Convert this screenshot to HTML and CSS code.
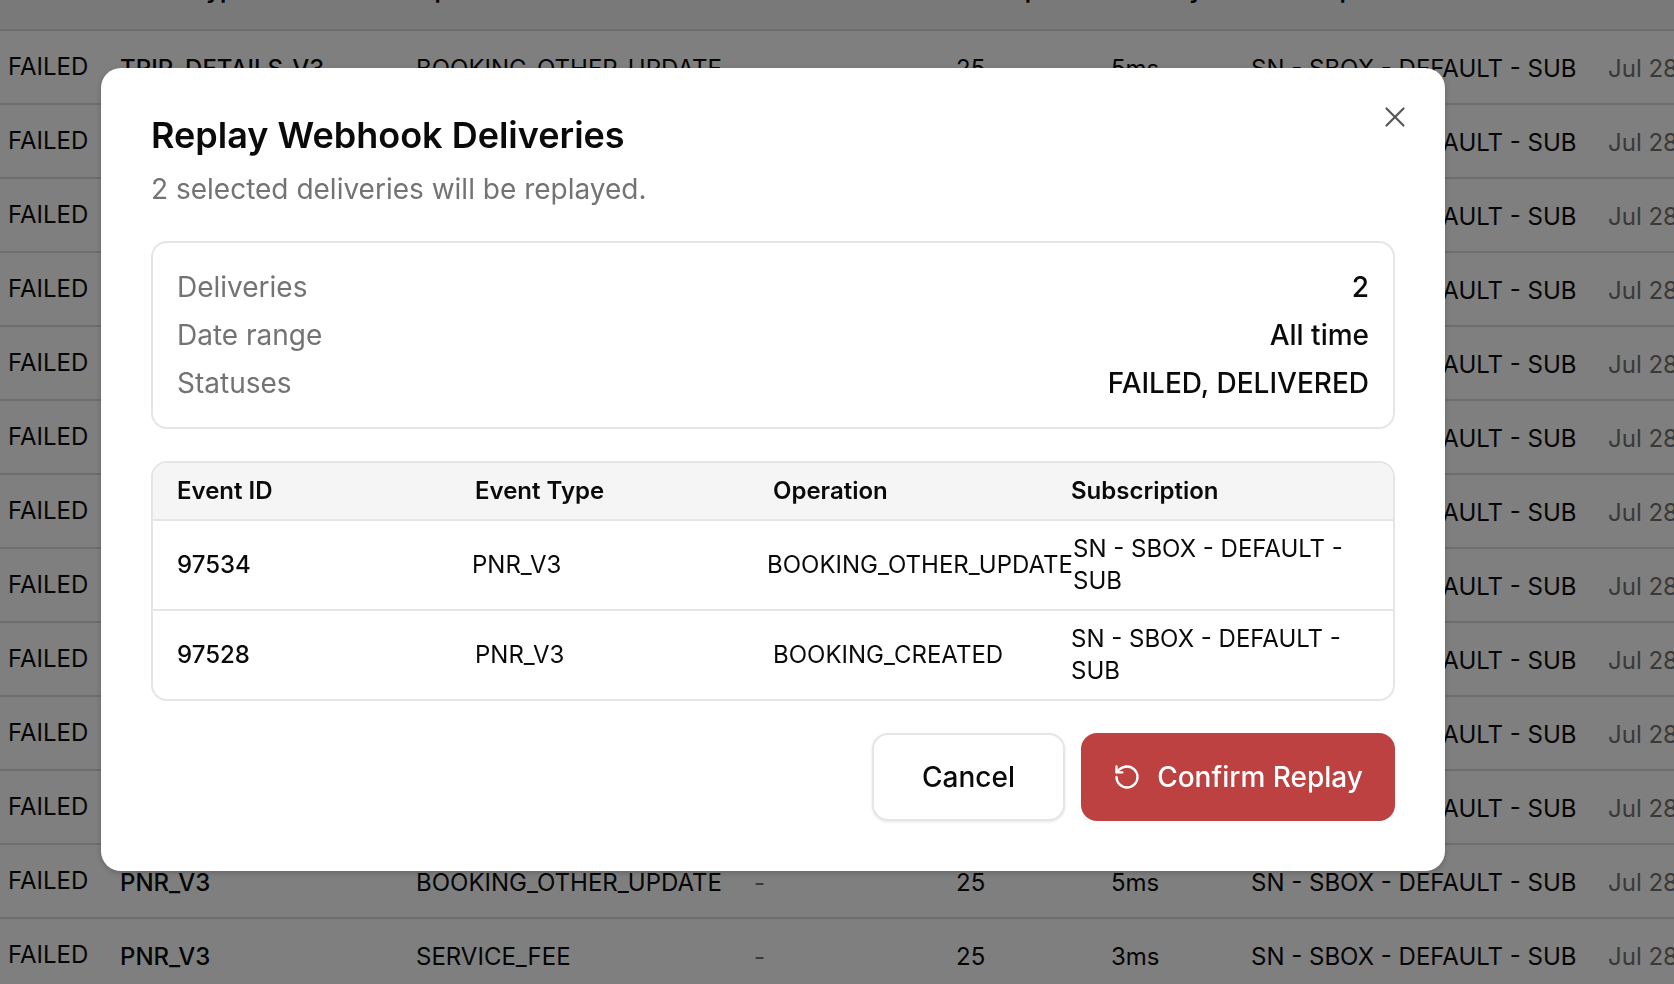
FILE: index.html
```html
<!DOCTYPE html>
<html lang="en">
<head>
    <meta charset="UTF-8">
    <title>Webhook Deliveries</title>
    <link rel="stylesheet" href="styles.css">
</head>
<body>
    <div class="page">
        <table class="log-table">
            <colgroup>
                <col class="col-status"><col class="col-type"><col class="col-op"><col class="col-dash">
                <col class="col-attempts"><col class="col-latency"><col class="col-sub"><col class="col-date">
            </colgroup>
            <thead>
                <tr><th>Status</th><th>Event Type</th><th>Operation</th><th>Error</th><th>Attempts</th><th>Latency</th><th>Subscription</th><th>Created</th></tr>
            </thead>
            <tbody>
                <tr><td class="status">FAILED</td><td class="type">TRIP_DETAILS_V3</td><td>BOOKING_OTHER_UPDATE</td><td class="dash">-</td><td>25</td><td>5ms</td><td>SN - SBOX - DEFAULT - SUB</td><td class="date">Jul 28</td></tr>
                <tr><td class="status">FAILED</td><td class="type">PNR_V3</td><td>BOOKING_OTHER_UPDATE</td><td class="dash">-</td><td>25</td><td>5ms</td><td>SN - SBOX - DEFAULT - SUB</td><td class="date">Jul 28</td></tr>
                <tr><td class="status">FAILED</td><td class="type">PNR_V3</td><td>BOOKING_CREATED</td><td class="dash">-</td><td>25</td><td>4ms</td><td>SN - SBOX - DEFAULT - SUB</td><td class="date">Jul 28</td></tr>
                <tr><td class="status">FAILED</td><td class="type">PNR_V3</td><td>SERVICE_FEE</td><td class="dash">-</td><td>25</td><td>3ms</td><td>SN - SBOX - DEFAULT - SUB</td><td class="date">Jul 28</td></tr>
                <tr><td class="status">FAILED</td><td class="type">PNR_V3</td><td>BOOKING_OTHER_UPDATE</td><td class="dash">-</td><td>25</td><td>5ms</td><td>SN - SBOX - DEFAULT - SUB</td><td class="date">Jul 28</td></tr>
                <tr><td class="status">FAILED</td><td class="type">PNR_V3</td><td>SERVICE_FEE</td><td class="dash">-</td><td>25</td><td>3ms</td><td>SN - SBOX - DEFAULT - SUB</td><td class="date">Jul 28</td></tr>
                <tr><td class="status">FAILED</td><td class="type">PNR_V3</td><td>BOOKING_OTHER_UPDATE</td><td class="dash">-</td><td>25</td><td>5ms</td><td>SN - SBOX - DEFAULT - SUB</td><td class="date">Jul 28</td></tr>
                <tr><td class="status">FAILED</td><td class="type">PNR_V3</td><td>BOOKING_CREATED</td><td class="dash">-</td><td>25</td><td>4ms</td><td>SN - SBOX - DEFAULT - SUB</td><td class="date">Jul 28</td></tr>
                <tr><td class="status">FAILED</td><td class="type">PNR_V3</td><td>SERVICE_FEE</td><td class="dash">-</td><td>25</td><td>3ms</td><td>SN - SBOX - DEFAULT - SUB</td><td class="date">Jul 28</td></tr>
                <tr><td class="status">FAILED</td><td class="type">PNR_V3</td><td>BOOKING_OTHER_UPDATE</td><td class="dash">-</td><td>25</td><td>5ms</td><td>SN - SBOX - DEFAULT - SUB</td><td class="date">Jul 28</td></tr>
                <tr><td class="status">FAILED</td><td class="type">PNR_V3</td><td>BOOKING_CREATED</td><td class="dash">-</td><td>25</td><td>4ms</td><td>SN - SBOX - DEFAULT - SUB</td><td class="date">Jul 28</td></tr>
                <tr><td class="status">FAILED</td><td class="type">PNR_V3</td><td>BOOKING_OTHER_UPDATE</td><td class="dash">-</td><td>25</td><td>5ms</td><td>SN - SBOX - DEFAULT - SUB</td><td class="date">Jul 28</td></tr>
                <tr><td class="status">FAILED</td><td class="type">PNR_V3</td><td>SERVICE_FEE</td><td class="dash">-</td><td>25</td><td>3ms</td><td>SN - SBOX - DEFAULT - SUB</td><td class="date">Jul 28</td></tr>
            </tbody>
        </table>
    </div>

    <div class="overlay">
        <div class="modal">
            <button class="close-btn" aria-label="Close">
                <svg width="34" height="34" viewBox="0 0 24 24" fill="none" stroke="currentColor" stroke-width="1.5" stroke-linecap="round"><path d="M18 6 6 18"/><path d="m6 6 12 12"/></svg>
            </button>
            <h2 class="modal-title">Replay Webhook Deliveries</h2>
            <p class="modal-sub">2 selected deliveries will be replayed.</p>

            <div class="summary">
                <div class="summary-row"><span>Deliveries</span><strong>2</strong></div>
                <div class="summary-row"><span>Date range</span><strong>All time</strong></div>
                <div class="summary-row"><span>Statuses</span><strong>FAILED, DELIVERED</strong></div>
            </div>

            <div class="preview">
                <div class="preview-row preview-head">
                    <div>Event ID</div><div>Event Type</div><div>Operation</div><div>Subscription</div>
                </div>
                <div class="preview-row preview-wide">
                    <div class="id">97534</div><div>PNR_V3</div><div>BOOKING_OTHER_UPDATE</div><div>SN - SBOX - DEFAULT - SUB</div>
                </div>
                <div class="preview-row">
                    <div class="id">97528</div><div>PNR_V3</div><div>BOOKING_CREATED</div><div>SN - SBOX - DEFAULT - SUB</div>
                </div>
            </div>

            <div class="actions">
                <button class="btn btn-cancel">Cancel</button>
                <button class="btn btn-confirm">
                    <svg width="28" height="28" viewBox="0 0 24 24" fill="none" stroke="currentColor" stroke-width="2" stroke-linecap="round" stroke-linejoin="round"><path d="M3 12a9 9 0 1 0 9-9 9.75 9.75 0 0 0-6.74 2.74L3 8"/><path d="M3 3v5h5"/></svg>
                    Confirm Replay
                </button>
            </div>
        </div>
    </div>
</body>
</html>
```

FILE: styles.css
```css
html, body {
    margin: 0;
    height: 100%;
    overflow: hidden;
}
body {
    background: #fff;
    color: #0a0a0a;
    font-family: Inter, "Liberation Sans", sans-serif;
}
.page {
    height: 984px;
    overflow: hidden;
}
.log-table {
    width: 1674px;
    margin-top: -44px;
    border-collapse: collapse;
    table-layout: fixed;
    font-size: 24px;
}
.col-status { width: 111px; }
.col-type { width: 296px; }
.col-op { width: 338px; }
.col-dash { width: 202px; }
.col-attempts { width: 155px; }
.col-latency { width: 140px; }
.col-sub { width: 357px; }
.log-table th, .log-table td {
    box-sizing: border-box;
    height: 74px;
    padding: 0 0 0 9px;
    border-bottom: 2px solid #dcdcdc;
    text-align: left;
    white-space: nowrap;
    overflow: hidden;
}
.log-table th {
    padding-bottom: 6px;
    background: #f2f2f2;
    font-weight: 600;
}
.log-table td {
    padding-top: 2px;
}
.log-table td.status {
    padding: 0 0 2px 8px;
}
.log-table .type {
    font-weight: 500;
}
.log-table .dash, .log-table .date {
    color: #737373;
}
.overlay {
    position: fixed;
    inset: 0;
    display: flex;
    align-items: flex-start;
    padding: 68px 0 0 101px;
    background: rgba(0, 0, 0, 0.5);
}
.modal {
    position: relative;
    box-sizing: border-box;
    width: 1344px;
    height: 803px;
    padding: 45px 50px;
    background: #fff;
    border-radius: 20px;
    box-shadow: 0 2px 6px rgba(0, 0, 0, 0.2);
}
.close-btn {
    position: absolute;
    top: 32px;
    right: 33px;
    display: flex;
    padding: 0;
    border: none;
    background: none;
    color: #555;
}
.modal-title {
    margin: 0;
    font-size: 36px;
    line-height: 44px;
    font-weight: 600;
}
.modal-sub {
    margin: 12px 0 0;
    font-size: 28px;
    line-height: 40px;
    color: #737373;
}
.summary {
    display: flex;
    flex-direction: column;
    gap: 8px;
    margin-top: 32px;
    padding: 24px;
    border: 2px solid #e5e5e5;
    border-radius: 16px;
    font-size: 28px;
    line-height: 40px;
}
.summary-row {
    display: flex;
    justify-content: space-between;
    color: #737373;
}
.summary-row strong {
    color: #0a0a0a;
    font-weight: 500;
}
.preview {
    margin-top: 32px;
    border: 2px solid #e5e5e5;
    border-radius: 16px;
    overflow: hidden;
    font-size: 24px;
    line-height: 32px;
}
.preview-row {
    display: grid;
    grid-template-columns: repeat(4, 298px);
    align-items: center;
    min-height: 88px;
    padding-left: 24px;
    border-top: 2px solid #e5e5e5;
}
.preview-head {
    min-height: 56px;
    border-top: none;
    background: #f5f5f5;
    font-weight: 600;
}
.id {
    font-weight: 500;
}
.preview-wide {
    grid-template-columns: 295px 295px 306px 298px;
}
.actions {
    display: flex;
    justify-content: flex-end;
    gap: 16px;
    margin-top: 32px;
}
.btn {
    display: flex;
    align-items: center;
    gap: 16px;
    box-sizing: border-box;
    height: 88px;
    border-radius: 16px;
    font-family: inherit;
    font-size: 28px;
    font-weight: 500;
}
.btn-cancel {
    width: 193px;
    justify-content: center;
    border: 2px solid #e5e5e5;
    background: #fff;
    color: #0a0a0a;
    box-shadow: 0 1px 3px rgba(0, 0, 0, 0.1);
}
.btn-confirm {
    width: 314px;
    justify-content: center;
    border: none;
    background: #bd4141;
    color: #fff;
}
```
